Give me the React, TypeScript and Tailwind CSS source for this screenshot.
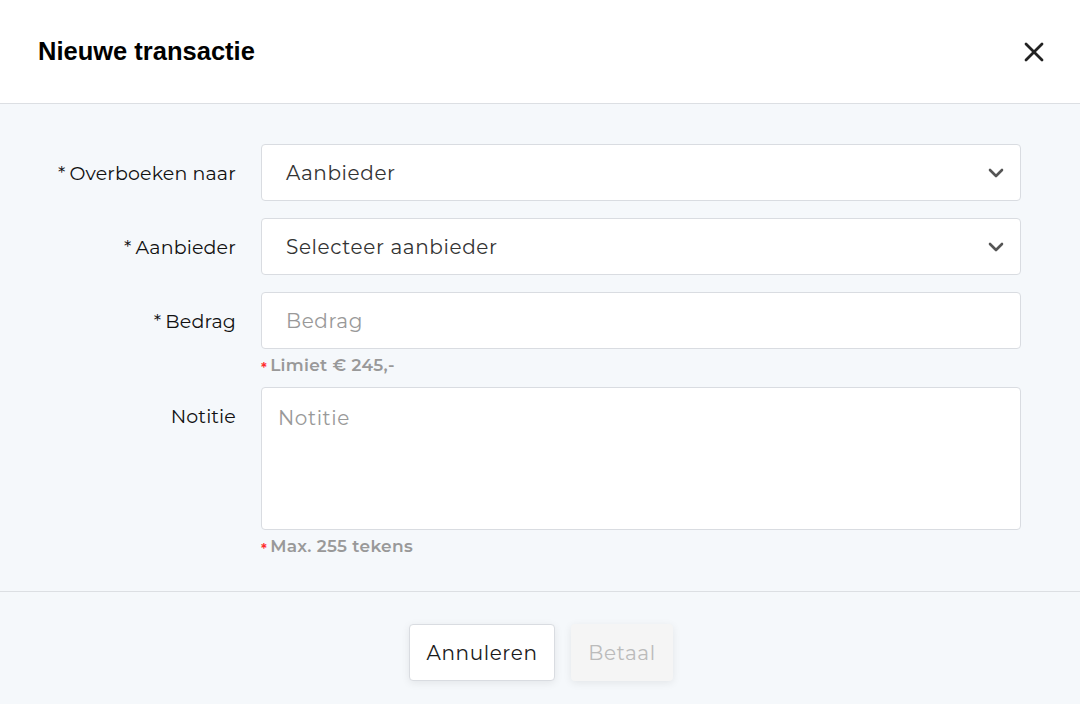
import { ChevronDown, X } from 'lucide-react'

const body = "font-['Montserrat','Inter','DejaVu_Sans',sans-serif]"

function Hint({ text }: { text: string }) {
  return (
    <div className="flex items-center gap-[3px] pt-[4px] text-[17px] tracking-[0.3px] font-semibold text-[#999]">
      <span className="text-[#ff2b2b] text-[14px] leading-none mt-[5px]">*</span>
      <span>{text}</span>
    </div>
  )
}

function Label({ text, required }: { text: string; required?: boolean }) {
  return (
    <div className="w-[261px] shrink-0 pr-[25px] pt-[3px] text-right text-[19px] tracking-[0.15px] text-[#111]">
      {required && <span className="mr-[4px]">*</span>}
      {text}
    </div>
  )
}

const field = 'w-[760px] bg-white border border-[#d9dce1] rounded-[4px] text-[20px] tracking-[0.6px]'

export default function App() {
  return (
    <div className={`w-[1080px] h-[704px] flex flex-col bg-[#f5f8fb] ${body}`}>
      {/* header */}
      <div className="h-[104px] shrink-0 flex items-center justify-between bg-white border-b border-[#dcdfe3] pl-[38px] pr-[30px]">
        <h1 className="font-['Liberation_Sans',Arial,sans-serif] text-[25.5px] font-bold text-black">Nieuwe transactie</h1>
        <X className="w-[32px] h-[32px] text-[#222]" strokeWidth={2.1} />
      </div>

      {/* form */}
      <div className="h-[488px] shrink-0 border-b border-[#dcdfe3] pt-[40px] flex flex-col">
        <div className="flex items-center">
          <Label text="Overboeken naar" required />
          <div className={`${field} h-[57px] flex items-center justify-between pl-[24px] pr-[12px] text-[#333]`}>
            <span className="pt-[1px]">Aanbieder</span>
            <ChevronDown className="w-[24px] h-[24px] text-[#555]" strokeWidth={2.6} />
          </div>
        </div>
        <div className="flex items-center mt-[17px]">
          <Label text="Aanbieder" required />
          <div className={`${field} h-[57px] flex items-center justify-between pl-[24px] pr-[12px] text-[#333]`}>
            <span>Selecteer aanbieder</span>
            <ChevronDown className="w-[24px] h-[24px] text-[#555]" strokeWidth={2.6} />
          </div>
        </div>
        <div className="flex mt-[17px]">
          <div className="h-[57px] flex items-center">
            <Label text="Bedrag" required />
          </div>
          <div className="flex flex-col">
            <div className={`${field} h-[57px] flex items-center pl-[24px] text-[#999]`}>Bedrag</div>
            <Hint text="Limiet € 245,-" />
          </div>
        </div>
        <div className="flex mt-[8px]">
          <div className="pt-[13px]">
            <Label text="Notitie" />
          </div>
          <div className="flex flex-col">
            <div className={`${field} h-[143px] pl-[16px] pt-[15px] text-[#999]`}>Notitie</div>
            <Hint text="Max. 255 tekens" />
          </div>
        </div>
      </div>

      {/* footer */}
      <div className="flex-1 flex items-start justify-center gap-[16px] pt-[32px] pl-[2px]">
        <button className="w-[146px] h-[57px] bg-white border border-[#d9dce1] rounded-[4px] shadow-[0_2px_8px_rgba(0,0,0,0.08)] text-[20px] tracking-[0.6px] text-[#1a1a1a]">
          Annuleren
        </button>
        <button className="w-[102px] h-[57px] bg-[#f5f5f5] rounded-[4px] shadow-[0_2px_8px_rgba(0,0,0,0.08)] text-[20px] tracking-[0.6px] text-[#bbb]">
          Betaal
        </button>
      </div>
    </div>
  )
}
